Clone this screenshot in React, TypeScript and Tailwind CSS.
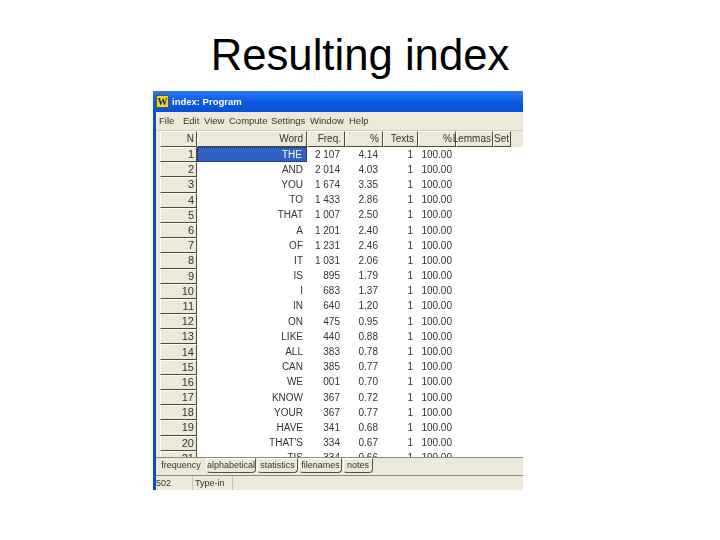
const rows: string[][] = [
  ["1", "THE", "2 107", "4.14", "1", "100.00"],
  ["2", "AND", "2 014", "4.03", "1", "100.00"],
  ["3", "YOU", "1 674", "3.35", "1", "100.00"],
  ["4", "TO", "1 433", "2.86", "1", "100.00"],
  ["5", "THAT", "1 007", "2.50", "1", "100.00"],
  ["6", "A", "1 201", "2.40", "1", "100.00"],
  ["7", "OF", "1 231", "2.46", "1", "100.00"],
  ["8", "IT", "1 031", "2.06", "1", "100.00"],
  ["9", "IS", "895", "1.79", "1", "100.00"],
  ["10", "I", "683", "1.37", "1", "100.00"],
  ["11", "IN", "640", "1.20", "1", "100.00"],
  ["12", "ON", "475", "0.95", "1", "100.00"],
  ["13", "LIKE", "440", "0.88", "1", "100.00"],
  ["14", "ALL", "383", "0.78", "1", "100.00"],
  ["15", "CAN", "385", "0.77", "1", "100.00"],
  ["16", "WE", "001", "0.70", "1", "100.00"],
  ["17", "KNOW", "367", "0.72", "1", "100.00"],
  ["18", "YOUR", "367", "0.77", "1", "100.00"],
  ["19", "HAVE", "341", "0.68", "1", "100.00"],
  ["20", "THAT'S", "334", "0.67", "1", "100.00"],
  ["21", "TIS", "334", "0.66", "1", "100.00"],
];

const raised =
  "bg-[#ece9d8] border-t border-l border-t-white border-l-white border-r border-b border-r-[#4a483f] border-b-[#4a483f]";

function HeaderCell({ label, width, pad }: { label: string; width: string; pad: string }) {
  return (
    <div className={`${width} ${pad} ${raised} h-full shrink-0 flex items-center justify-end whitespace-nowrap`}>
      {label}
    </div>
  );
}

function Tab({ label, width, active }: { label: string; width: string; active?: boolean }) {
  return (
    <div
      className={`${width} shrink-0 flex items-center justify-center whitespace-nowrap ${
        active
          ? "h-[17px] -mt-px"
          : "h-[15px] border border-t-white border-l-white border-r-[#55534a] border-b-[#55534a] rounded-b-sm"
      }`}
    >
      {label}
    </div>
  );
}

export default function App() {
  return (
    <div className="w-[720px] h-[540px] bg-white overflow-hidden flex flex-col text-black font-['Liberation_Sans',Arial,sans-serif]">
      <h1 className="h-[91px] pt-[30px] text-center text-[43.7px] leading-[50px] shrink-0">Resulting index</h1>

      <div className="ml-[153px] w-[370px] h-[399px] flex bg-[#ece9d8] text-[10px] leading-none blur-[0.3px]">
        <div className="w-[3px] shrink-0 bg-[#0a4bd0]" />
        <div className="flex-1 min-w-0 flex flex-col">
          {/* title bar */}
          <div className="h-[21px] -ml-[3px] shrink-0 flex items-center gap-[3px] pl-[3px] bg-gradient-to-b from-[#2a7af0] via-[#0a5be2] to-[#0a4fd4] text-white font-bold text-[9.5px]">
            <div className="w-[13px] h-[13px] bg-[#e8d820] border border-[#555] text-[#225] text-[10px] leading-[11px] text-center font-['Liberation_Serif',serif]">
              W
            </div>
            <span>index: Program</span>
          </div>

          {/* menu */}
          <div className="h-[19px] shrink-0 flex items-center text-[#333] text-[9.5px] pl-[3px] border-b border-[#d0cdb8]">
            <span className="w-[24px]">File</span>
            <span className="w-[21px]">Edit</span>
            <span className="w-[25px]">View</span>
            <span className="w-[42px]">Compute</span>
            <span className="w-[39px]">Settings</span>
            <span className="w-[39px]">Window</span>
            <span>Help</span>
          </div>

          {/* grid */}
          <div className="flex-1 min-h-0 overflow-hidden flex flex-col pl-[4px]">
            <div className="h-[16px] shrink-0 flex text-[#333]">
              <HeaderCell label="N" width="w-[37px]" pad="pr-[2px]" />
              <HeaderCell label="Word" width="w-[110px]" pad="pr-[3px]" />
              <HeaderCell label="Freq." width="w-[38px]" pad="pr-[3px]" />
              <HeaderCell label="%" width="w-[38px]" pad="pr-[3px]" />
              <HeaderCell label="Texts" width="w-[35px]" pad="pr-[3px]" />
              <HeaderCell label="%" width="w-[38px]" pad="pr-[3px]" />
              <HeaderCell label="Lemmas" width="w-[37px]" pad="pr-[1px]" />
              <HeaderCell label="Set" width="w-[18px]" pad="pr-[1px]" />
            </div>
            <div className="flex-1 min-h-0 overflow-hidden bg-white">
              {rows.map((r, i) => (
                <div key={r[0]} className="h-[15.2px] flex text-[#333] items-stretch">
                  <div className={`w-[37px] ${raised} shrink-0 flex items-center justify-end pr-[2px] text-[11px]`}>{r[0]}</div>
                  <div
                    className={`w-[110px] shrink-0 flex items-center justify-end pr-[4px] ${
                      i === 0 ? "bg-[#2f62c4] text-white border border-dotted border-[#222]" : ""
                    }`}
                  >
                    {r[1]}
                  </div>
                  <div className="w-[38px] shrink-0 flex items-center justify-end pr-[5px]">{r[2]}</div>
                  <div className="w-[38px] shrink-0 flex items-center justify-end pr-[5px]">{r[3]}</div>
                  <div className="w-[35px] shrink-0 flex items-center justify-end pr-[5px]">{r[4]}</div>
                  <div className="w-[38px] shrink-0 flex items-center justify-end pr-[4px]">{r[5]}</div>
                </div>
              ))}
            </div>
          </div>

          {/* tabs */}
          <div className="h-[18px] shrink-0 flex items-start gap-[1px] border-t border-[#8c8a7c] pl-[1px] text-[#333] text-[9px]">
            <Tab label="frequency" width="w-[48px]" active />
            <Tab label="alphabetical" width="w-[50px]" />
            <Tab label="statistics" width="w-[41px]" />
            <Tab label="filenames" width="w-[43px]" />
            <Tab label="notes" width="w-[30px]" />
          </div>

          {/* status */}
          <div className="h-[15px] shrink-0 flex items-center border-t border-[#8c8a7c] text-[#333] text-[9px]">
            <span className="w-[37px] h-full flex items-center border-r border-[#c8c5b2]">502</span>
            <span className="w-[40px] h-full flex items-center pl-[2px] border-r border-[#c8c5b2]">Type-in</span>
          </div>
        </div>
      </div>
    </div>
  );
}
